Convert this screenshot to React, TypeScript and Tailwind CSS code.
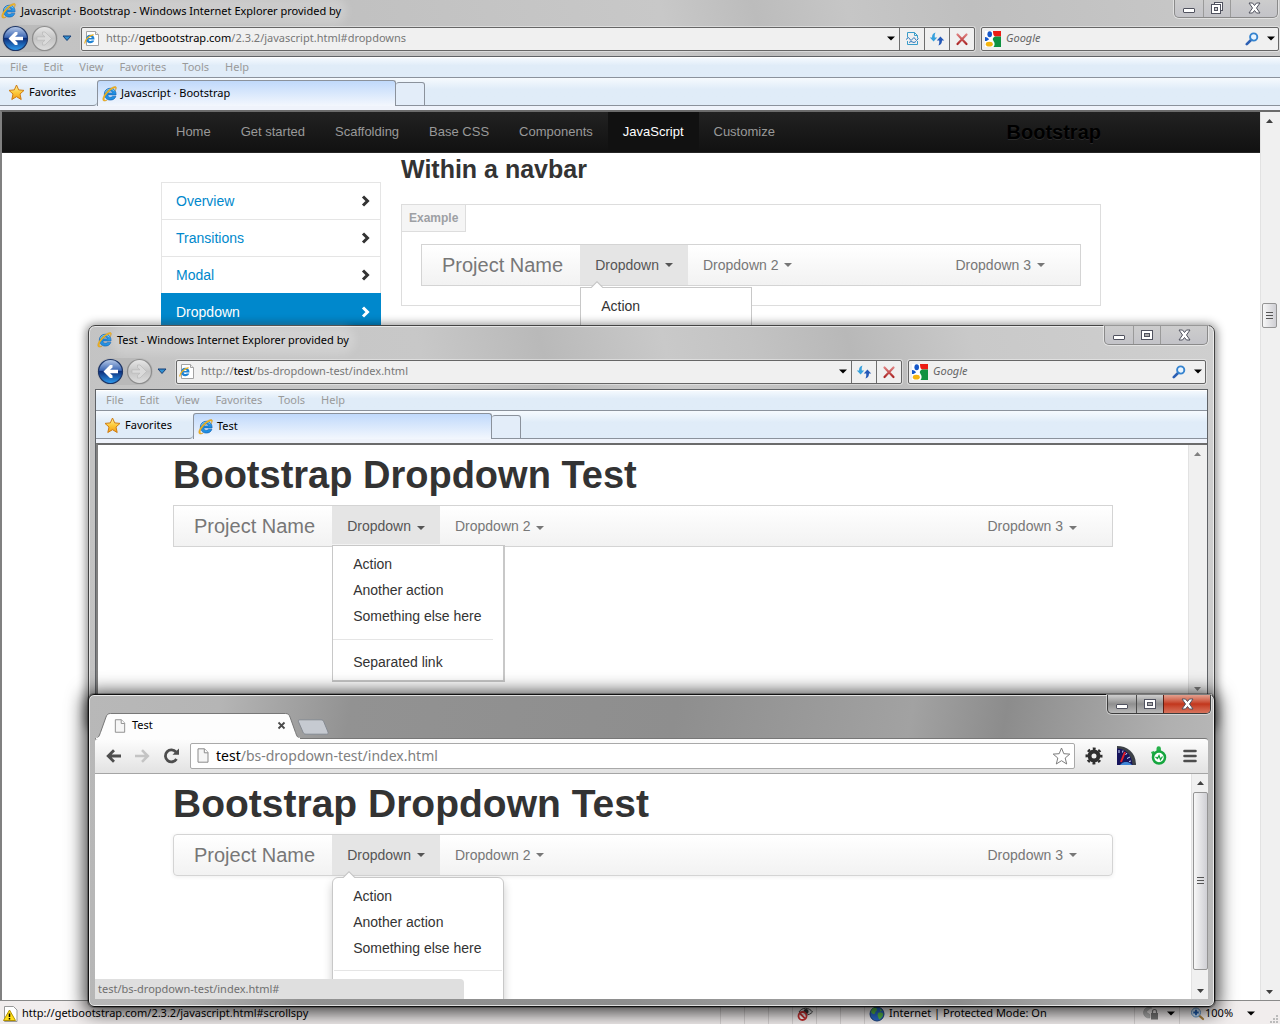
import React from "react";

const ui = "font-['Noto_Sans','Open_Sans',sans-serif]";
const arial = "font-['Liberation_Sans',Arial,sans-serif]";

/* ---------- icons ---------- */

function IeLogo({ size = 16 }: { size?: number }) {
  return (
    <svg width={size} height={size} viewBox="0 0 16 16" className="shrink-0" aria-hidden="true">
      <path
        d="M8.200 2.200c-3.400 0-5.900 2.500-5.900 5.900s2.500 6 6 6c2.700 0 4.900-1.400 5.600-3.900h-3.500c-.4.6-1.100 1-2 1-1.500 0-2.400-.9-2.500-2.300h8.200c.1-4.200-2.200-6.700-5.900-6.700zM5.900 6.900c.2-1.200 1-1.900 2.300-1.900s2.100.7 2.300 1.900z"
        fill="#1f8fe2"
        stroke="#0f5cae"
        strokeWidth=".6"
      />
      <path d="M3.400 6.500c.8-2 2.500-3.300 4.800-3.300 1.800 0 3.300.8 4.200 2" fill="none" stroke="#8fd6fb" strokeWidth="1" />
      <path
        d="M13.200 4.800c1.300-2 1.500-3.400.8-4-1-.9-3.800.2-6.600 2.500C3.400 6.500.2 11.400.9 14c.4 1.600 2.300 1.300 4.300.1-1.500.4-2.600.3-2.900-.5C1.700 11.800 4.400 7.800 7.700 4.900c2.400-2.100 4.700-3.400 5.600-2.900.5.3.4 1.400-.1 2.800z"
        fill="#f5b921"
        stroke="#d08a0a"
        strokeWidth=".4"
      />
    </svg>
  );
}

function IePage() {
  return (
    <svg width="16" height="17" viewBox="0 0 16 17" className="shrink-0" aria-hidden="true">
      <path d="M2.500 1.500h9l3 3v11h-12z" fill="#fff" stroke="#a3a3a3" />
      <path d="M11.500 1.500v3h3" fill="#eee" stroke="#a3a3a3" />
      <path
        d="M6.200 4.800C3.600 4.800 2 6.600 2 9s1.700 4.200 4.200 4.200c2 0 3.500-1 4-2.700H7.600c-.3.400-.7.600-1.300.6-1 0-1.600-.6-1.700-1.500h5.900c.1-3-1.500-4.800-4.300-4.800zM4.700 8c.1-.8.7-1.200 1.500-1.200s1.400.4 1.500 1.200z"
        fill="#1f83d4"
      />
      <path d="M.8 13.500C.4 10.500 5 5.500 9.600 4.600" fill="none" stroke="#eeb021" strokeWidth="1.200" />
    </svg>
  );
}

function Star() {
  return (
    <svg width="17" height="17" viewBox="0 0 17 17" className="shrink-0" aria-hidden="true">
      <defs>
        <linearGradient id="starFill" x1="0" y1="0" x2="0" y2="1">
          <stop offset="0" stopColor="#fff3a8" />
          <stop offset=".5" stopColor="#fccb3c" />
          <stop offset="1" stopColor="#f39b14" />
        </linearGradient>
      </defs>
      <path
        d="M8.500 1l2.200 4.900 5.300.5-4 3.600 1.200 5.500-4.700-2.800-4.700 2.800L5 10 1 6.400l5.300-.5z"
        fill="url(#starFill)"
        stroke="#cf7d12"
        strokeLinejoin="round"
      />
    </svg>
  );
}

function NavOrbs() {
  return (
    <span className="flex w-[56px] shrink-0 items-center rounded-full bg-[#b3b3b3]/60">
      <button type="button" aria-label="Back" className="size-[27px]">
        <svg width="27" height="27" viewBox="0 0 27 27">
          <defs>
            <linearGradient id="orb" x1="0" y1="0" x2="0" y2="1">
              <stop offset="0" stopColor="#b9cbe9" />
              <stop offset=".45" stopColor="#3d68b4" />
              <stop offset=".5" stopColor="#0d2f7c" />
              <stop offset="1" stopColor="#2d9cf0" />
            </linearGradient>
          </defs>
          <circle cx="13.500" cy="13.500" r="12" fill="url(#orb)" stroke="#1d3566" strokeWidth="1.200" />
          <path d="M13 7l-6.500 6.500L13 20h2.500v-2.500L13 15.200h8v-3.400h-8l2.500-2.300V7z" fill="#fff" />
        </svg>
      </button>
      <button type="button" aria-label="Forward" className="ml-[2px] size-[27px]">
        <svg width="27" height="27" viewBox="0 0 27 27">
          <defs>
            <linearGradient id="orbOff" x1="0" y1="0" x2="0" y2="1">
              <stop offset="0" stopColor="#e8e8e8" />
              <stop offset=".5" stopColor="#c4c4c4" />
              <stop offset="1" stopColor="#dedede" />
            </linearGradient>
          </defs>
          <circle cx="13.500" cy="13.500" r="12" fill="url(#orbOff)" stroke="#8d8d8d" strokeWidth="1.200" />
          <path
            d="M14 7l6.500 6.500L14 20h-2.500v-2.500l2.500-2.300H6v-3.400h8l-2.500-2.300V7z"
            fill="#dadada"
            stroke="#b9b9b9"
            strokeWidth=".7"
          />
        </svg>
      </button>
    </span>
  );
}

function Down({ className = "" }: { className?: string }) {
  return (
    <svg width="8" height="5" viewBox="0 0 8 5" className={`shrink-0 ${className}`} aria-hidden="true">
      <path d="M0 .5h8L4 4.500z" fill="currentColor" />
    </svg>
  );
}

function HistoryArrow() {
  return (
    <svg width="10" height="7" viewBox="0 0 10 7" className="mr-[3px] ml-[4px] shrink-0" aria-hidden="true">
      <path d="M1 1h8L5 5.500z" fill="#2f8fd0" stroke="#173f77" strokeLinejoin="round" />
    </svg>
  );
}

function GoogleTile() {
  return (
    <svg width="16" height="16" viewBox="0 0 16 16" className="shrink-0" aria-hidden="true">
      <path d="M0 0h16v16H0z" fill="#fff" />
      <path d="M8 0h8v5.500h-6C8.500 5 8 3 8 0z" fill="#ec1c14" />
      <path d="M10 5.500h6V16H8.500C10 14 10 12 8.500 10 7 8 8 6.500 10 5.500z" fill="#0f9240" />
      <ellipse cx="4.700" cy="3.200" rx="2.300" ry="3" fill="#1658c9" />
      <path d="M0 6c2 0 3.500 1 4 2.500L1.500 10H0z" fill="#1658c9" />
      <ellipse cx="4.300" cy="13.200" rx="3.500" ry="2.400" fill="#f5b50f" />
    </svg>
  );
}

function RefreshIcon() {
  return (
    <svg width="16" height="16" viewBox="0 0 16 16" aria-hidden="true">
      <path d="M6.500 1.500C4 2.200 3 4 3 6.500H.8L4.600 10.500 8.200 6.500H5.800C5.600 4.500 5.800 3 6.500 1.500z" fill="#37a1dd" />
      <path d="M9.500 14.500c2.500-.7 3.500-2.500 3.500-5h2.200L11.400 5.500 7.800 9.500h2.400c.2 2 0 3.500-.7 5z" fill="#2459b8" />
    </svg>
  );
}

function StopIcon() {
  return (
    <svg width="14" height="14" viewBox="0 0 14 14" aria-hidden="true">
      <defs>
        <linearGradient id="stopRed" gradientUnits="userSpaceOnUse" x1="0" y1="1" x2="0" y2="13">
          <stop offset="0" stopColor="#e58a8a" />
          <stop offset="1" stopColor="#a81f1f" />
        </linearGradient>
      </defs>
      <path d="M2.500 2.500l9 9.500M11.500 2.500l-9 9.500" stroke="url(#stopRed)" strokeWidth="2.200" strokeLinecap="round" />
    </svg>
  );
}

function CompatIcon() {
  return (
    <svg width="13" height="15" viewBox="0 0 13 15" aria-hidden="true" fill="none" stroke="#3a9cc9">
      <path d="M1.500 6.500v-5h7l3 3v3M1.500 10v3.500h10V10" />
      <path d="M8.500 1.500v3h3" />
      <path d="M0 8.500l2.500-2 2.500 3 3-3 2.500 3 2-2M3 11.500l2-1 3 1 2-1" stroke="#2f78bb" />
    </svg>
  );
}

function Magnifier() {
  return (
    <svg width="14" height="14" viewBox="0 0 14 14" aria-hidden="true">
      <path d="M6 8L1.800 12.200" stroke="#2c5fb3" strokeWidth="2.600" strokeLinecap="round" />
      <circle cx="8.700" cy="5" r="3.600" fill="#e8f4ff" stroke="#3583cf" strokeWidth="1.900" />
    </svg>
  );
}

function PageIcon({ size = 15 }: { size?: number }) {
  return (
    <svg width="12" height={size} viewBox="0 0 12 15" className="shrink-0" aria-hidden="true">
      <path d="M1 .8h6.500L11 4.500v9.700H1z" fill="#f6f6f6" stroke="#8b8b8b" />
      <path d="M7.300.8v4H11" fill="#fff" stroke="#8b8b8b" />
    </svg>
  );
}

/* ---------- window pieces ---------- */

function WindowControls({ restore = false, hot = false }: { restore?: boolean; hot?: boolean }) {
  const frame = hot
    ? "border-[#3d3d3d] bg-linear-to-b from-[#cfcfcf] via-[#8f8f8f] to-[#b9b9b9]"
    : "border-[#8a8a8a] bg-linear-to-b from-[#cdcdcd] to-[#c3c3c8]";
  const close = hot ? "bg-linear-to-b from-[#e2a08f] via-[#c2361c] to-[#d7735c] border-[#5c1d12]" : "border-[#9a9a9a]";
  const divider = hot ? "border-[#4c4c4c]" : "border-[#9a9a9a]";
  return (
    <div className={`flex h-[19px] w-[104px] shrink-0 overflow-hidden rounded-b-[5px] border border-t-0 shadow-[0_0_0_1px_rgba(255,255,255,0.45)] ${frame}`}>
      <button type="button" aria-label="Minimize" className="flex w-[28px] items-center justify-center pt-[5px]">
        <svg width="12" height="5" viewBox="0 0 12 5">
          <rect x=".5" y=".5" width="11" height="4" rx=".5" fill="#fff" stroke="#50525f" />
        </svg>
      </button>
      <button type="button" aria-label={restore ? "Restore" : "Maximize"} className={`flex w-[27px] items-center justify-center border-l ${divider}`}>
        <svg width="12" height="12" viewBox="0 0 12 12">
          {restore ? (
            <>
              <rect x="3.500" y=".5" width="8" height="8" fill="#fff" stroke="#50525f" />
              <rect x=".5" y="2.500" width="9" height="9" fill="#fff" stroke="#50525f" />
              <rect x="3.500" y="5.500" width="3" height="3" fill="#ccc" stroke="#50525f" />
            </>
          ) : (
            <>
              <rect x=".5" y="1.500" width="11" height="9" fill="#fff" stroke="#50525f" />
              <rect x="3.500" y="4.500" width="5" height="3" fill="#aaa" stroke="#50525f" />
            </>
          )}
        </svg>
      </button>
      <button type="button" aria-label="Close" className={`flex flex-1 items-center justify-center border-l ${close}`}>
        <svg width="13" height="12" viewBox="0 0 13 12">
          <path
            d="M1 1h3.500l2 2.500L8.500 1H12L8.500 6l3.500 5H8.500l-2-2.500-2 2.500H1l3.500-5z"
            fill="#fff"
            stroke="#50525f"
            strokeLinejoin="round"
          />
        </svg>
      </button>
    </div>
  );
}

function ScrollBar({ thumb, faded = false, wide = false }: { thumb?: React.ReactNode; faded?: boolean; wide?: boolean }) {
  const tone = faded ? "text-[#808080]" : "text-[#404040]";
  return (
    <div
      className={`flex shrink-0 flex-col items-center border-l border-[#e2e2e2] bg-[#f0f0f0] ${wide ? "w-[18px]" : "w-[17px]"} ${tone}`}
      aria-hidden="true"
    >
      <svg width="7" height="17" viewBox="0 0 7 17">
        <path d="M0 11h7L3.500 7z" fill="currentColor" />
      </svg>
      <div className="flex w-full flex-1 flex-col items-center">{thumb}</div>
      <svg width="7" height="17" viewBox="0 0 7 17">
        <path d="M0 7h7l-3.500 4z" fill="currentColor" />
      </svg>
    </div>
  );
}

function Thumb({ className }: { className: string }) {
  return (
    <div className={`flex w-[15px] items-center justify-center rounded-[2px] border border-[#949494] bg-linear-to-r from-[#f7f7f7] to-[#cfcfd4] ${className}`}>
      <svg width="7" height="8" viewBox="0 0 7 8" stroke="#555">
        <path d="M0 .5h7M0 3.500h7M0 6.500h7" />
      </svg>
    </div>
  );
}

function IeFrame({
  title,
  host,
  path,
  tab,
  maximized = false,
  children,
}: {
  title: string;
  host: string;
  path: string;
  tab: string;
  maximized?: boolean;
  children: React.ReactNode;
}) {
  const tool = "flex w-[25px] shrink-0 items-center justify-center border-l border-[#6e6e6e]";
  return (
    <>
      <header className={`flex justify-between ${maximized ? "h-[23px]" : "h-[30px]"}`}>
        <div className={`flex h-[22px] items-center gap-1 text-[11px] text-black ${maximized ? "pl-px" : "mt-[3px] pl-[2px]"}`}>
          <IeLogo />
          <span className="rounded-full bg-white/20 whitespace-nowrap shadow-[0_0_8px_6px_rgba(255,255,255,0.2)]">{title}</span>
        </div>
        <div className={maximized ? "-mt-px mr-[2px]" : ""}>
          <WindowControls restore={maximized} />
        </div>
      </header>
      <div className={`flex h-[33px] items-center pb-[2px] pl-[2px] ${maximized ? "pr-px" : "pr-[2px]"}`}>
        <NavOrbs />
        <HistoryArrow />
        <div className="ml-[6px] flex h-[24px] min-w-0 flex-1 rounded-[2px] border border-[#666] bg-[#f0f0f0] shadow-[0_0_0_1px_rgba(255,255,255,0.4)]">
          <div className="flex min-w-0 flex-1 items-center gap-[6px] pr-1 pl-[2px]">
            <IePage />
            <div role="textbox" aria-label="Address" className="flex-1 truncate text-[11px] text-[#777]">
              http://<span className="text-black">{host}</span>
              {path}
            </div>
            <Down className="text-black" />
          </div>
          {maximized && (
            <button type="button" aria-label="Compatibility view" className={tool}>
              <CompatIcon />
            </button>
          )}
          <button type="button" aria-label="Refresh" className={tool}>
            <RefreshIcon />
          </button>
          <button type="button" aria-label="Stop" className={tool}>
            <StopIcon />
          </button>
        </div>
        <div className="ml-[6px] flex h-[24px] w-[298px] shrink-0 items-center rounded-[2px] border border-[#666] bg-[#f0f0f0] px-[3px] shadow-[0_0_0_1px_rgba(255,255,255,0.4)]">
          <GoogleTile />
          <input
            aria-label="Search with Google"
            placeholder="Google"
            className="mx-[5px] min-w-0 flex-1 bg-transparent text-[11px] italic outline-none placeholder:text-[#666]"
          />
          <button type="button" aria-label="Search">
            <Magnifier />
          </button>
          <Down className="ml-2 text-black" />
        </div>
      </div>
      <div className={`flex min-h-0 flex-1 flex-col border-t border-[#5f6266] ${maximized ? "" : "border-x"}`}>
        <nav className="flex h-[20px] shrink-0 items-center gap-4 border-t border-white bg-linear-to-b from-[#f4f9fe] to-[#e0ecf8] to-40% pl-[10px] text-[11px] text-[#9a9a9a]">
          {["File", "Edit", "View", "Favorites", "Tools", "Help"].map((m) => (
            <button key={m} type="button">
              {m}
            </button>
          ))}
        </nav>
        <div className="flex h-[29px] shrink-0 border-t border-[#8b929c] bg-linear-to-b from-[#f6fafe] to-[#e0ecf8] to-40% pt-[2px] text-[11px] text-black">
          <button type="button" className="flex w-[97px] items-center gap-1 rounded-br-[4px] border-b border-[#8b929c] pb-px pl-[8px]">
            <Star />
            Favorites
          </button>
          <button
            type="button"
            className="flex w-[299px] items-center gap-[3px] rounded-t-[3px] border border-b-0 border-[#8b929c] bg-linear-to-b from-[#c0d9fb] to-[#f3f7fd] pl-[4px]"
          >
            <IeLogo />
            {tab}
          </button>
          <button type="button" aria-label="New tab" className="mt-[2px] w-[29px] rounded-t-[3px] border border-l-0 border-[#8b929c] bg-[#e3edf9]" />
          <div className="flex-1 border-b border-[#8b929c]" />
        </div>
        <div className="h-[4px] shrink-0 bg-[#eff3fb]" />
        <div className="flex min-h-0 flex-1 border-t-2 border-l-2 border-t-[#6b6b6b] border-l-[#808080] bg-white">{children}</div>
      </div>
    </>
  );
}

/* ---------- page pieces ---------- */

function Caret({ low = false }: { low?: boolean }) {
  return <span className={`ml-[6px] inline-block border-x-4 border-t-4 border-x-transparent border-t-current ${low ? "mt-[3px]" : ""}`} />;
}

function ProjectNav({ menu, look }: { menu: string[][]; look: "square" | "legacy" | "round" }) {
  const box = look === "round" ? "rounded-[4px] shadow-[0_1px_4px_rgba(0,0,0,0.07)]" : "";
  const panel =
    look === "round"
      ? "top-[42px] h-[138px] w-[172px] rounded-[6px] border shadow-[0_5px_10px_rgba(0,0,0,0.2)]"
      : look === "legacy"
        ? "top-[39px] w-[173px] border border-r-2 border-b-2"
        : "top-[42px] w-[172px] border";
  const link = "flex h-[40px] items-center px-[15px]";
  const low = look === "legacy";
  return (
    <nav className={`flex h-[42px] border border-[#d4d4d4] bg-linear-to-b from-white to-[#f2f2f2] text-[14px] text-[#777] ${box}`}>
      <a href="#project" className="flex items-center pr-[18px] pl-[20px] text-[20px]">
        Project Name
      </a>
      <div className="relative">
        <a href="#dropdown" className={`-ml-px flex items-center bg-[#e5e5e5] px-[15px] text-[#555] ${low ? "h-[38px] pt-[2px]" : "h-[40px]"}`}>
          Dropdown
          <Caret low={low} />
        </a>
        <ul className={`absolute -left-px z-10 border-[#c8c8c8] bg-white py-[5px] leading-[26px] text-[#333] ${panel}`}>
          {look !== "legacy" && (
            <svg width="14" height="7" viewBox="0 0 14 7" className="absolute -top-[7px] left-[9px]" aria-hidden="true">
              <path d="M0 7L7 0l7 7z" fill="#c4c4c4" />
              <path d="M1.500 7L7 1.500 12.500 7z" fill="#fff" />
            </svg>
          )}
          {menu.map((group, i) => (
            <React.Fragment key={i}>
              {i > 0 && <li className={`h-px bg-[#e5e5e5] ${low ? "mt-[10px] mr-[10px] mb-[9px]" : "mx-px my-[9px]"}`} role="separator" />}
              {group.map((label) => (
                <li key={label}>
                  <a href="#item" className="block px-[20px] whitespace-nowrap">
                    {label}
                  </a>
                </li>
              ))}
            </React.Fragment>
          ))}
        </ul>
      </div>
      <a href="#dropdown2" className={link}>
        Dropdown 2
        <Caret low={low} />
      </a>
      <a href="#dropdown3" className={`${link} mr-[20px] ml-auto`}>
        Dropdown 3
        <Caret low={low} />
      </a>
    </nav>
  );
}

const actions = ["Action", "Another action", "Something else here"];

function DocsPage() {
  const links = ["Home", "Get started", "Scaffolding", "Base CSS", "Components", "JavaScript", "Customize"];
  return (
    <div className={`min-w-0 flex-1 overflow-hidden ${arial}`}>
      <div className="h-[41px] border-b border-[#252525] bg-linear-to-b from-[#222] to-[#111]">
        <nav className="mx-auto flex h-full max-w-[940px] text-[13px] text-[#999]">
          {links.map((l) => (
            <a
              key={l}
              href="#nav"
              className={l === "JavaScript" ? "flex items-center bg-[#111] px-[15px] text-white" : "flex items-center px-[15px]"}
            >
              {l}
            </a>
          ))}
          <a href="#brand" className="ml-auto flex items-center text-[20px] font-bold text-black [text-shadow:0_1px_0_rgba(255,255,255,0.1)]">
            Bootstrap
          </a>
        </nav>
      </div>
      <div className="mx-auto flex max-w-[940px] gap-5">
        <ul className="mt-[29px] w-[220px] shrink-0 text-[14px] leading-5 text-[#08c]">
          {["Overview", "Transitions", "Modal", "Dropdown"].map((l) => {
            const active = l === "Dropdown";
            return (
              <li key={l}>
                <a
                  href="#section"
                  className={`-mb-px flex items-center justify-between border py-2 pr-[10px] pl-[14px] ${
                    active ? "border-[#08c] bg-[#08c] text-white" : "border-[#e5e5e5]"
                  }`}
                >
                  {l}
                  <svg width="9" height="12" viewBox="0 0 9 12" aria-hidden="true">
                    <path d="M2 1.500L6.500 6 2 10.500" fill="none" stroke={active ? "#fff" : "#333"} strokeWidth="3" />
                  </svg>
                </a>
              </li>
            );
          })}
        </ul>
        <div className="min-w-0 flex-1">
          <h3 className="mb-[19px] text-[25px] leading-8 font-bold text-[#333]">Within a navbar</h3>
          <section className="border border-[#ddd]">
            <div className="flex">
              <h4 className="border-r border-b border-[#ddd] bg-[#f5f5f5] px-[7px] text-[12px] leading-[26px] font-bold text-[#9da0a4]">
                Example
              </h4>
            </div>
            <div className="mx-[19px] mt-[12px] mb-[19px]">
              <ProjectNav look="square" menu={[actions, ["Separated link"]]} />
            </div>
          </section>
        </div>
      </div>
    </div>
  );
}

function TestPage({ look }: { look: "legacy" | "round" }) {
  const menu = look === "legacy" ? [actions, ["Separated link"]] : [actions, []];
  return (
    <div className={`min-w-0 flex-1 overflow-hidden pt-[10px] ${arial}`}>
      <div className="mx-auto max-w-[940px]">
        <h1 className={`mb-[10px] leading-10 font-bold text-[#333] ${look === "round" ? "text-[39px]" : "text-[38px]"}`}>
          Bootstrap Dropdown Test
        </h1>
        <ProjectNav look={look} menu={menu} />
      </div>
    </div>
  );
}

/* ---------- status bar ---------- */

function StatusBar() {
  const cell = "w-[24px] shrink-0 border-l border-[#d5d1d1]";
  return (
    <footer className="flex h-[24px] shrink-0 items-center border-t border-[#8a8a8a] bg-[#f1eded] pt-[2px] text-[11px] text-black">
      <div className="flex flex-1 items-center gap-1 pl-[3px]">
        <svg width="15" height="16" viewBox="0 0 15 16" aria-hidden="true">
          <path d="M1.500.5h9l3.500 3.500v11.500H1.500z" fill="#fff" stroke="#999" />
          <path d="M6.500 4L12.500 14.500H.5z" fill="#ffde17" stroke="#b39200" strokeLinejoin="round" />
          <path d="M6.500 7.500v3.500M6.500 12v1.500" stroke="#000" strokeWidth="1.500" />
        </svg>
        http://getbootstrap.com/2.3.2/javascript.html#scrollspy
      </div>
      <div className="flex h-full items-center">
        <span className={`${cell} h-full`} />
        <span className={`${cell} h-full`} />
        <span className={`${cell} h-full`} />
        <span className={`${cell} flex h-full items-center pl-[4px]`}>
          <svg width="17" height="16" viewBox="0 0 17 16" aria-hidden="true">
            <path d="M2 6c3-5 10-5 13.500 0-3.500 4-10 4-13.500 0z" fill="#ddd" stroke="#444" />
            <circle cx="9" cy="5.500" r="2.500" fill="#333" />
            <circle cx="5.500" cy="10" r="4" fill="#fff" fillOpacity=".7" stroke="#c53030" strokeWidth="1.800" />
            <path d="M3 7.500l5 5" stroke="#c53030" strokeWidth="1.800" />
          </svg>
        </span>
        <span className={`${cell} h-full`} />
        <span className={`${cell} h-full`} />
        <span className="flex h-full w-[270px] items-center gap-[4px] border-l border-[#d5d1d1] pl-[4px]">
          <svg width="16" height="16" viewBox="0 0 16 16" aria-hidden="true">
            <circle cx="8" cy="8" r="7" fill="#2767c5" stroke="#1a417c" />
            <path d="M3 3c2-2 5-1.500 5 .5S6 5 6 7 3 8 2 6zM9 7c2-1.500 5-.5 5 1.500s-2 4-3.500 5C9 12 9.500 11 8.500 9.500zM11 2.500l2 2-2 1z" fill="#57b947" />
          </svg>
          Internet | Protected Mode: On
        </span>
        <span className="flex h-full w-[45px] items-center gap-2 border-l border-[#d5d1d1] pl-[8px]">
          <svg width="16" height="15" viewBox="0 0 16 15" aria-hidden="true">
            <path d="M9 2a5.500 5.500 0 1 0-2 10V8.500L3 6l4-3.500z" fill="#b5b5b5" stroke="#999" strokeWidth=".5" />
            <rect x="8" y="7" width="7" height="6.500" fill="#777" />
            <path d="M9.500 7V5.500a2 2 0 0 1 4 0V7" fill="none" stroke="#777" strokeWidth="1.200" />
          </svg>
          <Down />
        </span>
        <span className="flex h-full w-[101px] items-center border-l border-[#d5d1d1] pl-[10px]">
          <svg width="15" height="14" viewBox="0 0 15 14" aria-hidden="true">
            <path d="M9 8.500l4 3.500" stroke="#a8813d" strokeWidth="2.200" strokeLinecap="round" />
            <circle cx="6" cy="5.500" r="4.500" fill="#cfe6fb" stroke="#5d92c4" />
            <path d="M6 2.800v5.400M3.300 5.500h5.400" stroke="#1d5db3" strokeWidth="1.800" />
          </svg>
          100%
          <Down className="mr-auto ml-[14px]" />
          <svg width="9" height="9" viewBox="0 0 9 9" className="mr-px self-end" fill="#bbb" aria-hidden="true">
            <path d="M6 0h2v2H6zM3 3h2v2H3zM6 3h2v2H6zM0 6h2v2H0zM3 6h2v2H3zM6 6h2v2H6z" />
          </svg>
        </span>
      </div>
    </footer>
  );
}

/* ---------- second browser ---------- */

function ChromeWindow() {
  return (
    <section
      aria-label="Test"
      className="absolute top-[694px] right-[65px] bottom-[17px] left-[88px] flex flex-col rounded-[6px] border border-[#111] bg-[linear-gradient(100deg,#b8b8b8_0,#b5b5b5_130px,#929292_260px,#8e8e8e_50%,#a2a2a2_70%,#8c8c8c_78%,#b0b0b0_92%,#bdbdbd_100%)] px-[6px] pb-[7px] shadow-[0_0_0_1px_rgba(0,0,0,0.25),0_2px_18px_4px_rgba(0,0,0,0.75),inset_0_0_0_1px_rgba(255,255,255,0.7)]"
    >
      <header className="flex h-[43px] shrink-0 items-end">
        <div className="relative z-10 flex h-[25px] w-[206px] items-center">
          <svg width="206" height="26" viewBox="0 0 206 26" className="absolute top-0 left-0" aria-hidden="true">
            <path d="M0 26C4 25 4.500 22 6 18L11 4c1-2.500 2-3.500 4.500-3.500h175c2.500 0 3.500 1 4.500 3.500l5 14c1.500 4 2 7 6 8z" fill="#fdfdfd" stroke="#777" />
            <path d="M1 25.500h204" stroke="#fdfdfd" strokeWidth="1.500" />
          </svg>
          <div className="relative flex w-full items-center pr-[15px] pl-[19px] text-[11px] text-black">
            <PageIcon size={14} />
            <span className="ml-[6px] flex-1">Test</span>
            <button type="button" aria-label="Close tab">
              <svg width="9" height="9" viewBox="0 0 9 9">
                <path d="M1.500 1.500l6 6M7.500 1.500l-6 6" stroke="#4b4b4b" strokeWidth="1.800" />
              </svg>
            </button>
          </div>
        </div>
        <button type="button" aria-label="New tab" className="-ml-[4px] mb-[3px]">
          <svg width="32" height="16" viewBox="0 0 32 16">
            <path d="M3 .8h21c1.500 0 2.300.7 2.800 2L31 13c.5 1.500 0 2.200-1.500 2.200H9c-1.500 0-2.500-.7-3-2L1.500 2.800C1 1.500 1.500.8 3 .8z" fill="#c6cad1" stroke="#858a91" />
          </svg>
        </button>
        <div className="-mr-[3px] ml-auto self-start">
          <WindowControls hot />
        </div>
      </header>
      <div className="flex h-[36px] shrink-0 items-center rounded-t-[3px] border-t border-b border-t-[#777] border-b-[#a5a5a5] bg-linear-to-b from-[#fdfdfd] to-[#e2e2e2] px-[11px] pb-px">
        <button type="button" aria-label="Back">
          <svg width="15" height="14" viewBox="0 0 15 14" fill="none" stroke="#4d4d4d" strokeWidth="2.800">
            <path d="M15 7H2.500M8 1.200L2.200 7 8 12.800" />
          </svg>
        </button>
        <button type="button" aria-label="Forward" className="ml-[14px]">
          <svg width="15" height="14" viewBox="0 0 15 14" fill="none" stroke="#c4c4c4" strokeWidth="2.600">
            <path d="M0 7h12.500M7 1.200L12.800 7 7 12.800" />
          </svg>
        </button>
        <button type="button" aria-label="Reload" className="ml-[13px]">
          <svg width="17" height="16" viewBox="0 0 17 16">
            <path d="M13.500 11A6 6 0 1 1 13 4" fill="none" stroke="#4d4d4d" strokeWidth="2.800" />
            <path d="M9.500 6.800H16V.5z" fill="#4d4d4d" />
          </svg>
        </button>
        <div className="ml-[10px] flex h-[26px] flex-1 items-center rounded-[2px] border border-[#a9a9a9] bg-white pr-[3px] pl-[6px]">
          <PageIcon />
          <div role="textbox" aria-label="Address" className="ml-[7px] flex-1 text-[14px] text-[#808080]">
            <span className="text-black">test</span>/bs-dropdown-test/index.html
          </div>
          <button type="button" aria-label="Bookmark">
            <svg width="19" height="18" viewBox="0 0 19 18">
              <path d="M9.500 1l2.300 5.700 6 .4-4.600 3.900 1.500 6-5.200-3.300L4.300 17l1.500-6L1.200 7.100l6-.4z" fill="#fff" stroke="#7d7d7d" strokeLinejoin="round" />
            </svg>
          </button>
        </div>
        <button type="button" aria-label="Settings" className="ml-[10px]">
          <svg width="18" height="18" viewBox="0 0 18 18">
            <circle cx="9" cy="9" r="4.500" fill="none" stroke="#2e2e2e" strokeWidth="4" />
            <circle cx="9" cy="9" r="7.300" fill="none" stroke="#2e2e2e" strokeWidth="2.400" strokeDasharray="2.900 2.833" strokeDashoffset="1.450" />
          </svg>
        </button>
        <button type="button" aria-label="Page speed" className="ml-[14px]">
          <svg width="19" height="19" viewBox="0 0 19 19">
            <path d="M0 0c10 0 19 6 19 19H0z" fill="#3c4046" />
            <path d="M0 2.500c8 0 15 6 15.500 16.500H0z" fill="#16145c" />
            <path d="M3 19c3-4 9-4 12 0z" fill="#3f86d6" />
            <path d="M4 16L8 6" stroke="#e3202c" strokeWidth="2" />
            <path d="M2 4v3M6 4.500l-.5 2M10 7L8.500 9M13 11l-3 1.500M14 15l-2 .5" stroke="#c7d4f5" />
          </svg>
        </button>
        <button type="button" aria-label="Timer" className="ml-[14px]">
          <svg width="17" height="19" viewBox="0 0 17 19">
            <path d="M6.500 5V2.500a2.200 2.200 0 0 1 4.400 0V5z" fill="#27b14b" />
            <path d="M1 6l3-1 1.500 3-3 1.500z" fill="#27b14b" />
            <circle cx="9" cy="11.500" r="6" fill="#fff" stroke="#16a63f" strokeWidth="2.500" />
            <path d="M5.500 11l2 1.500L9 9.500l1.500 4 2-3" fill="none" stroke="#16a63f" strokeWidth="1.300" />
          </svg>
        </button>
        <button type="button" aria-label="Menu" className="ml-[16px]">
          <svg width="14" height="14" viewBox="0 0 14 14" stroke="#4d4d4d" strokeWidth="2.600" strokeLinecap="round">
            <path d="M1.500 2h11M1.500 7h11M1.500 12h11" />
          </svg>
        </button>
      </div>
      <div className="relative flex min-h-0 flex-1 bg-white">
        <TestPage look="round" />
        <ScrollBar thumb={<Thumb className="mt-px h-[178px]" />} />
        <div className={`absolute bottom-0 left-0 z-20 h-[20px] w-[369px] rounded-tr-[4px] bg-[#dfdfdf] pl-[3px] text-[11px] leading-5 text-[#6f6f6f] ${ui}`}>
          test/bs-dropdown-test/index.html#
        </div>
      </div>
    </section>
  );
}

export default function App() {
  return (
    <main className={`relative h-screen overflow-hidden bg-white ${ui}`}>
      <section
        aria-label="Javascript · Bootstrap"
        className="isolate flex h-full flex-col bg-[linear-gradient(75deg,#c9c9c9_0,#bfbfbf_35%,#c8c8c8_60%,#bcbcbc_66%,#c6c6c6_72%,#bfbfbf_80%,#cacaca_100%)]"
      >
        <IeFrame
          maximized
          title="Javascript · Bootstrap - Windows Internet Explorer provided by"
          host="getbootstrap.com"
          path="/2.3.2/javascript.html#dropdowns"
          tab="Javascript · Bootstrap"
        >
          <DocsPage />
          <ScrollBar wide thumb={<Thumb className="mt-[174px] h-[25px]" />} />
          <div className="w-[2px] bg-[#f0f0f0]" />
        </IeFrame>
        <StatusBar />
      </section>

      <section
        aria-label="Test"
        className="absolute top-[325px] right-[65px] left-[88px] isolate flex h-[403px] flex-col rounded-[7px] border border-[#444] bg-[linear-gradient(75deg,#c2c2c2_0,#c8c8c8_35%,#b9b9b9_45%,#c9c9c9_55%,#c3c3c3_62%,#b8b8b8_70%,#c9c9c9_80%,#cfcfcf_100%)] px-[6px] pb-[30px] shadow-[0_1px_10px_2px_rgba(0,0,0,0.45),inset_0_0_0_1px_rgba(255,255,255,0.6)]"
      >
        <IeFrame
          title="Test - Windows Internet Explorer provided by"
          host="test"
          path="/bs-dropdown-test/index.html"
          tab="Test"
        >
          <TestPage look="legacy" />
          <ScrollBar faded wide />
          <div className="w-px bg-[#f0f0f0]" />
        </IeFrame>
      </section>

      <ChromeWindow />
    </main>
  );
}
